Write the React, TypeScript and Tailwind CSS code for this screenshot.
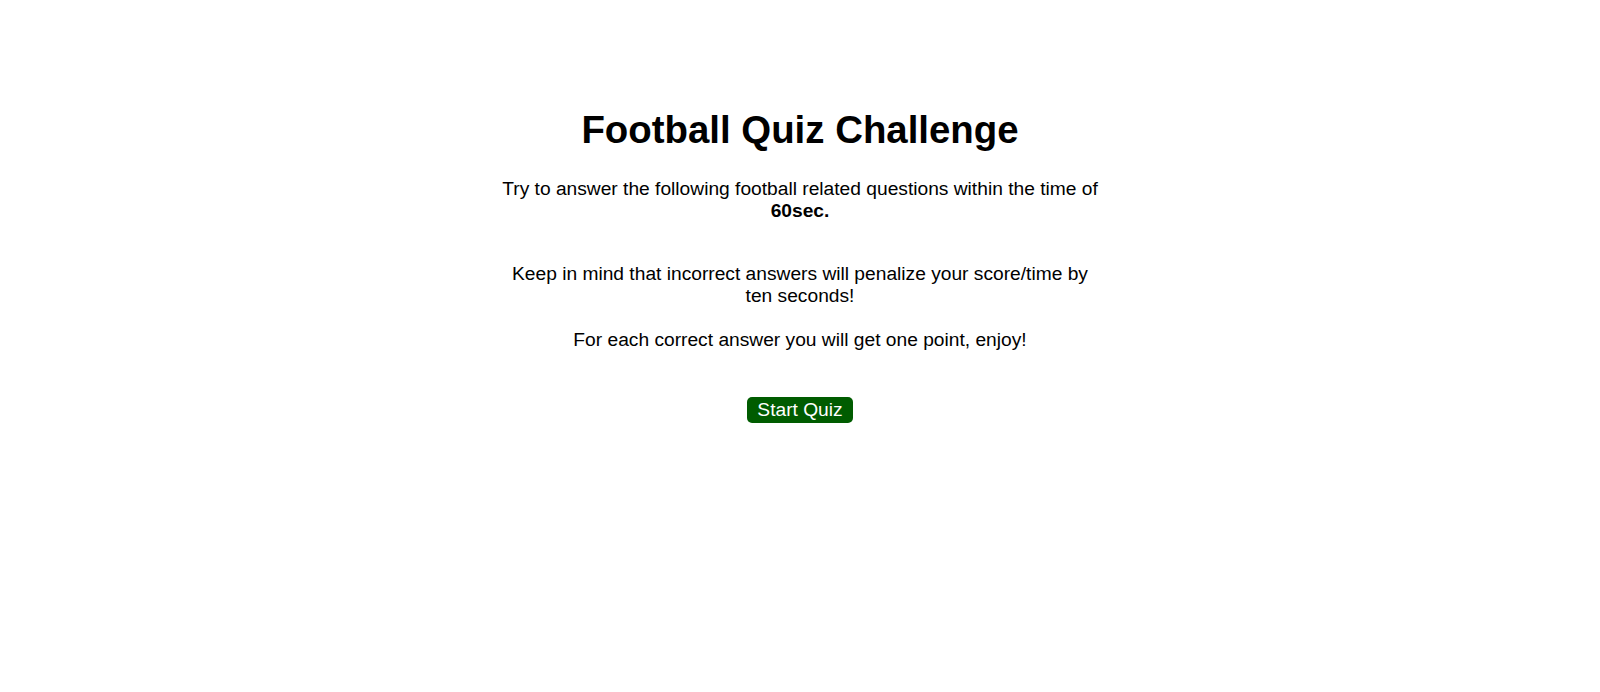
export default function App() {
  return (
    <main className="flex min-h-screen flex-col items-center bg-white pt-[108px] text-center font-['Liberation_Sans',Arial,sans-serif] text-black">
      <h1 className="text-[38.4px] leading-[44px] font-bold">Football Quiz Challenge</h1>
      <div className="mt-[26px] w-[600px] text-[19.2px] leading-[22px]">
        <p>
          Try to answer the following football related questions within the time of <strong>60sec.</strong>
        </p>
        <p className="mt-[41px]">Keep in mind that incorrect answers will penalize your score/time by ten seconds!</p>
        <p className="mt-[22px]">For each correct answer you will get one point, enjoy!</p>
      </div>
      <button className="mt-[46px] h-[26px] w-[106px] rounded-[5px] bg-[#005c00] text-[19.2px] leading-[22px] text-white">
        Start Quiz
      </button>
    </main>
  );
}
